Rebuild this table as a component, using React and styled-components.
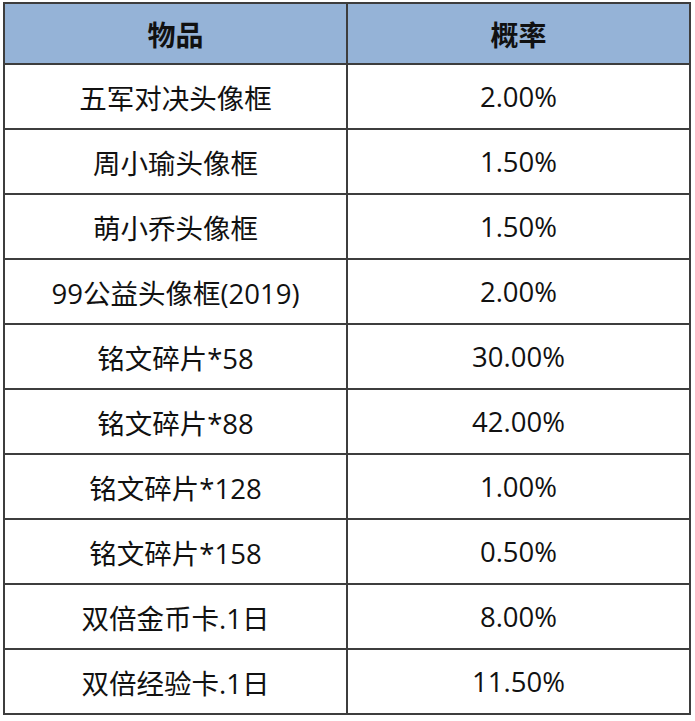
import React from 'react'
import styled, { createGlobalStyle } from 'styled-components'

const GlobalStyle = createGlobalStyle`
  html, body {
    margin: 0;
    padding: 0;
    background: #ffffff;
  }
`

const Page = styled.div`
  padding: 2px 0 0 3px;
  width: 695px;
  height: 721px;
  box-sizing: border-box;
  background: #ffffff;
`

const Table = styled.table`
  border-collapse: collapse;
  width: 688px;
  table-layout: fixed;
  font-family: 'Open Sans', 'Noto Sans CJK SC', sans-serif;
  color: #111111;
`

const HeadCell = styled.th`
  background: #95b3d7;
  border: 2px solid #3d3d3d;
  height: 59px;
  padding: 0;
  font-size: 28px;
  font-weight: 700;
  text-align: center;
  vertical-align: middle;
`

const Cell = styled.td`
  border: 2px solid #3d3d3d;
  height: 63px;
  padding: 0;
  font-size: 27.5px;
  font-weight: 400;
  text-align: center;
  vertical-align: middle;
  white-space: nowrap;
`

const rows = [
  ['五军对决头像框', '2.00%'],
  ['周小瑜头像框', '1.50%'],
  ['萌小乔头像框', '1.50%'],
  ['99公益头像框(2019)', '2.00%'],
  ['铭文碎片*58', '30.00%'],
  ['铭文碎片*88', '42.00%'],
  ['铭文碎片*128', '1.00%'],
  ['铭文碎片*158', '0.50%'],
  ['双倍金币卡.1日', '8.00%'],
  ['双倍经验卡.1日', '11.50%'],
]

const App = () => (
  <Page>
    <GlobalStyle />
    <Table>
      <colgroup>
        <col style={{ width: '50%' }} />
        <col style={{ width: '50%' }} />
      </colgroup>
      <thead>
        <tr>
          <HeadCell>物品</HeadCell>
          <HeadCell>概率</HeadCell>
        </tr>
      </thead>
      <tbody>
        {rows.map(([item, rate]) => (
          <tr key={item}>
            <Cell>{item}</Cell>
            <Cell>{rate}</Cell>
          </tr>
        ))}
      </tbody>
    </Table>
  </Page>
)

export default App
